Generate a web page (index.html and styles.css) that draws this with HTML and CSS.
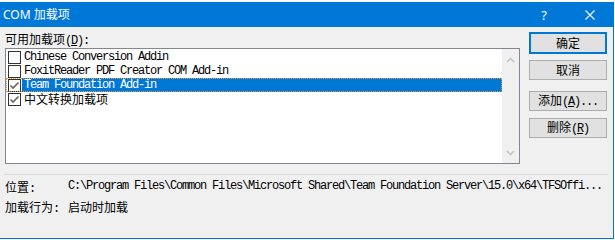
FILE: index.html
```html
<!DOCTYPE html>
<html lang="zh-CN">
<head>
    <meta charset="UTF-8">
    <title>COM 加载项</title>
    <link rel="stylesheet" href="styles.css">
</head>
<body>
    <div class="window">
        <!-- 标题栏 -->
        <div class="titlebar">
            <span class="title">COM 加载项</span>
            <span class="caption-btn help">?</span>
            <span class="caption-btn close">
                <svg width="10" height="10" viewBox="0 0 10 10">
                    <path d="M0.5 0.5 L9.5 9.5 M9.5 0.5 L0.5 9.5" stroke="#fff" stroke-width="1.1" fill="none"/>
                </svg>
            </span>
        </div>

        <div class="content">
            <div class="main">
                <div class="left">
                    <div class="label">可用加载项<span class="en">(<u>D</u>):</span></div>

                    <!-- 加载项列表 -->
                    <div class="listbox">
                        <ul class="items">
                            <li class="item">
                                <span class="box"></span>
                                <span class="text en">Chinese Conversion Addin</span>
                            </li>
                            <li class="item">
                                <span class="box"></span>
                                <span class="text en">FoxitReader PDF Creator COM Add-in</span>
                            </li>
                            <li class="item selected">
                                <span class="box">
                                    <svg width="11" height="11" viewBox="0 0 11 11"><polyline points="1.5,5.5 4,8 9.5,2.5" stroke="#666" stroke-width="1.6" fill="none"/></svg>
                                </span>
                                <span class="text en">Team Foundation Add-in</span>
                            </li>
                            <li class="item">
                                <span class="box">
                                    <svg width="11" height="11" viewBox="0 0 11 11"><polyline points="1.5,5.5 4,8 9.5,2.5" stroke="#666" stroke-width="1.6" fill="none"/></svg>
                                </span>
                                <span class="text">中文转换加载项</span>
                            </li>
                        </ul>
                        <div class="scrollbar">
                            <svg width="9" height="6" viewBox="0 0 9 6"><polyline points="1,5 4.5,1.5 8,5" stroke="#c4c4c4" stroke-width="1.6" fill="none"/></svg>
                            <svg width="9" height="6" viewBox="0 0 9 6"><polyline points="1,1 4.5,4.5 8,1" stroke="#c4c4c4" stroke-width="1.6" fill="none"/></svg>
                        </div>
                    </div>
                </div>

                <!-- 按钮 -->
                <div class="buttons">
                    <button class="btn default">确定</button>
                    <button class="btn cancel">取消</button>
                    <button class="btn add">添加<span class="en">(<u>A</u>)...</span></button>
                    <button class="btn remove">删除<span class="en">(<u>R</u>)</span></button>
                </div>
            </div>

            <div class="separator"></div>

            <!-- 详细信息 -->
            <div class="info">
                <span class="info-label">位置<span class="en">:</span></span>
                <span class="info-value en">C:\Program Files\Common Files\Microsoft Shared\Team Foundation Server\15.0\x64\TFSOffi...</span>
                <span class="info-label">加载行为<span class="en">:</span></span>
                <span class="info-value">启动时加载</span>
            </div>
        </div>
    </div>
</body>
</html>
```

FILE: styles.css
```css
/* 基本 */
body {
    margin: 0;
    background-color: #ffffff;
    font-family: "Noto Sans CJK SC", sans-serif;
    font-size: 12px;
    color: #000;
}

.en {
    font-family: "Liberation Mono", "Noto Sans CJK SC", monospace;
    letter-spacing: -1.2px;
}

.window {
    margin-top: 2px;
    width: 614px;
    height: 237px;
    box-sizing: border-box;
    border-right: 1px solid #0078d7;
    border-bottom: 1px solid #0078d7;
    background-color: #f0f0f0;
}

/* 标题栏 */
.titlebar {
    height: 25px;
    background-color: #0078d7;
    color: #fff;
    display: flex;
    align-items: center;
    padding-left: 3px;
}

.title {
    flex: 1;
    font-family: "Noto Sans", "Noto Sans CJK SC", sans-serif;
    font-size: 12px;
    line-height: 25px;
}

.caption-btn {
    width: 46px;
    height: 25px;
    display: flex;
    align-items: center;
    justify-content: center;
}

.help {
    font-family: "Noto Sans", sans-serif;
    font-size: 13px;
}

/* 内容 */
.content {
    height: 211px;
}

.main {
    display: flex;
}

.left {
    padding-left: 5px;
}

.label {
    margin-top: 5px;
    height: 14px;
    line-height: 14px;
    margin-bottom: 2px;
}

.listbox {
    width: 515px;
    height: 116px;
    box-sizing: border-box;
    border: 1px solid #828790;
    background-color: #fff;
    display: flex;
}

.items {
    flex: 1;
    list-style: none;
    margin: 0;
    padding: 1px 0 0 0;
}

.item {
    height: 14px;
    line-height: 14px;
    display: flex;
    align-items: center;
}

.box {
    width: 13px;
    height: 13px;
    box-sizing: border-box;
    margin-left: 2px;
    border: 1px solid #333;
    background-color: #fff;
    display: flex;
}

.text {
    flex: 1;
    height: 14px;
    margin-left: 1px;
    padding-left: 2px;
    white-space: nowrap;
}

.selected {
    outline: 1px dotted #e39a45;
    outline-offset: -1px;
}

.selected .text {
    background-color: #0078d7;
    color: #fff;
}

.scrollbar {
    width: 17px;
    background-color: #f0f0f0;
    display: flex;
    flex-direction: column;
    align-items: center;
    justify-content: space-between;
    padding: 8px 0 7px 0;
}

/* 按钮 */
.buttons {
    margin-left: 9px;
    display: flex;
    flex-direction: column;
}

.btn {
    width: 78px;
    height: 20px;
    padding: 0;
    box-sizing: border-box;
    background-color: #e1e1e1;
    border: 1px solid #adadad;
    font-family: "Noto Sans CJK SC", sans-serif;
    font-size: 12px;
    line-height: 16px;
    color: #000;
}

.default {
    margin-top: 5px;
    height: 22px;
    border: 2px solid #0078d7;
}

.cancel {
    margin-top: 6px;
}

.add {
    margin-top: 11px;
}

.remove {
    margin-top: 7px;
}

.separator {
    margin: 10px 5px 0 4px;
    height: 1px;
    background-color: #d9d9d9;
}

/* 详细信息 */
.info {
    margin-top: 3px;
    padding-left: 5px;
    display: grid;
    grid-template-columns: 63px 1fr;
    line-height: 17px;
}

.info-value {
    white-space: nowrap;
}
```
